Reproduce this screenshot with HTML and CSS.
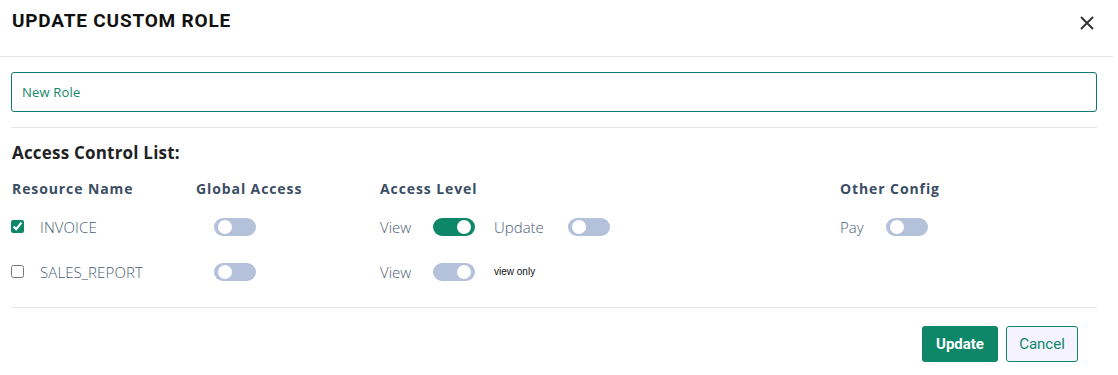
FILE: index.html
```html
<!DOCTYPE html>
<html lang="en">
<head>
    <meta charset="UTF-8">
    <meta name="viewport" content="width=device-width, initial-scale=1.0">
    <title>Update Custom Role</title>
    <link rel="stylesheet" href="styles.css">
</head>
<body>
    <div class="dialog">
        <div class="dialog-header">
            <h2 class="dialog-title">UPDATE CUSTOM ROLE</h2>
            <button class="close-btn" aria-label="close">
                <svg width="14" height="14" viewBox="0 0 14 14">
                    <path d="M1 1L13 13M13 1L1 13" stroke="#333" stroke-width="2" fill="none"/>
                </svg>
            </button>
        </div>

        <div class="dialog-body">
            <input class="role-input" type="text" value="New Role">
            <div class="divider"></div>

            <h3 class="acl-title">Access Control List:</h3>

            <div class="acl-grid">
                <div class="col-head">Resource Name</div>
                <div class="col-head">Global Access</div>
                <div class="col-head">Access Level</div>
                <div class="col-head">Other Config</div>

                <!-- invoice -->
                <div class="cell">
                    <input type="checkbox" class="res-check" checked>
                    <span class="res-name">INVOICE</span>
                </div>
                <div class="cell cell-global">
                    <span class="switch"><span class="knob"></span></span>
                </div>
                <div class="cell cell-level">
                    <span class="lvl-label lvl-view">View</span>
                    <span class="switch on"><span class="knob"></span></span>
                    <span class="lvl-label lvl-update">Update</span>
                    <span class="switch"><span class="knob"></span></span>
                </div>
                <div class="cell cell-level">
                    <span class="lvl-label lvl-pay">Pay</span>
                    <span class="switch"><span class="knob"></span></span>
                </div>

                <!-- sales report -->
                <div class="cell">
                    <input type="checkbox" class="res-check">
                    <span class="res-name">SALES_REPORT</span>
                </div>
                <div class="cell cell-global">
                    <span class="switch"><span class="knob"></span></span>
                </div>
                <div class="cell cell-level">
                    <span class="lvl-label lvl-view">View</span>
                    <span class="switch locked"><span class="knob"></span></span>
                    <span class="note">view only</span>
                </div>
                <div class="cell"></div>
            </div>

            <div class="divider divider-bottom"></div>
        </div>

        <div class="dialog-footer">
            <button class="btn btn-primary">Update</button>
            <button class="btn btn-outline">Cancel</button>
        </div>
    </div>
</body>
</html>
```

FILE: styles.css
```css
* {
    margin: 0;
    padding: 0;
    box-sizing: border-box;
}

html, body {
    width: 100%;
    height: 100%;
    overflow: hidden;
    background-color: #fff;
}

body {
    font-family: 'Open Sans', sans-serif;
}

.dialog {
    width: 1118px;
}

.dialog-header {
    height: 57px;
    padding: 9px 19px 0 12px;
    display: flex;
    align-items: flex-start;
    justify-content: space-between;
    border-bottom: 1px solid #e6e6e6;
    margin-right: 5px;
}

.dialog-title {
    font-family: Roboto, sans-serif;
    font-size: 19px;
    font-weight: 700;
    line-height: 24px;
    letter-spacing: 0.8px;
    color: #111;
}

.close-btn {
    border: none;
    background: none;
    width: 14px;
    height: 14px;
    margin-top: 7px;
    cursor: pointer;
    display: flex;
}

.dialog-body {
    padding: 15px 21px 0 11px;
}

.role-input {
    display: block;
    width: 100%;
    height: 40px;
    border: 1px solid #12776f;
    border-radius: 3px;
    padding: 0 10px;
    font-family: 'Open Sans', sans-serif;
    font-size: 13px;
    letter-spacing: 0.2px;
    color: #17876a;
    outline: none;
}

.divider {
    height: 1px;
    background-color: #e6e6e6;
    margin-top: 15px;
}

.acl-title {
    margin-top: 13px;
    font-size: 17px;
    font-weight: 700;
    line-height: 24px;
    letter-spacing: 0.2px;
    color: #222;
    padding-left: 1px;
}

.acl-grid {
    margin-top: 14px;
    display: grid;
    grid-template-columns: 184px 184px 460px 1fr;
    grid-template-rows: 25px 45px 45px;
}

.col-head {
    padding-left: 1px;
    font-size: 14px;
    font-weight: 700;
    line-height: 20px;
    letter-spacing: 0.9px;
    color: #3b4d63;
}

.cell {
    display: flex;
    align-items: center;
    font-size: 15px;
    font-weight: 300;
    color: #4c5c72;
}

.cell-level {
    padding-left: 1px;
}

.res-check {
    width: 13px;
    height: 13px;
    margin: 0 16px 0 0;
    accent-color: #0d8768;
}

.res-name {
    letter-spacing: 0.1px;
}

.cell-global {
    padding-left: 19px;
}

.lvl-label {
    flex: none;
}

.lvl-view {
    width: 53px;
}

.lvl-update {
    width: 74px;
    margin-left: 19px;
}

.lvl-pay {
    width: 46px;
}

.switch {
    position: relative;
    flex: none;
    display: inline-block;
    width: 42px;
    height: 18px;
    border-radius: 9px;
    background-color: #b3c1da;
}

.switch .knob {
    position: absolute;
    top: 2px;
    left: 4px;
    width: 14px;
    height: 14px;
    border-radius: 50%;
    background-color: #fff;
}

.switch.on {
    background-color: #0d8768;
}

.switch.on .knob,
.switch.locked .knob {
    left: 24px;
}

.note {
    margin-left: 19px;
    font-family: 'Liberation Sans', Arial, sans-serif;
    font-size: 10px;
    font-weight: 400;
    color: #111;
}

.divider-bottom {
    margin-top: 13px;
}

.dialog-footer {
    display: flex;
    justify-content: flex-end;
    gap: 8px;
    padding: 18px 40px 0 0;
}

.btn {
    height: 36px;
    border-radius: 3px;
    font-family: Roboto, sans-serif;
    font-size: 15px;
    cursor: pointer;
}

.btn-primary {
    width: 76px;
    border: none;
    background-color: #0d8768;
    color: #fff;
    font-weight: 700;
}

.btn-outline {
    width: 72px;
    border: 1px solid #0d8768;
    background-color: #f5f3ff;
    color: #0d8768;
    font-weight: 400;
}
```
